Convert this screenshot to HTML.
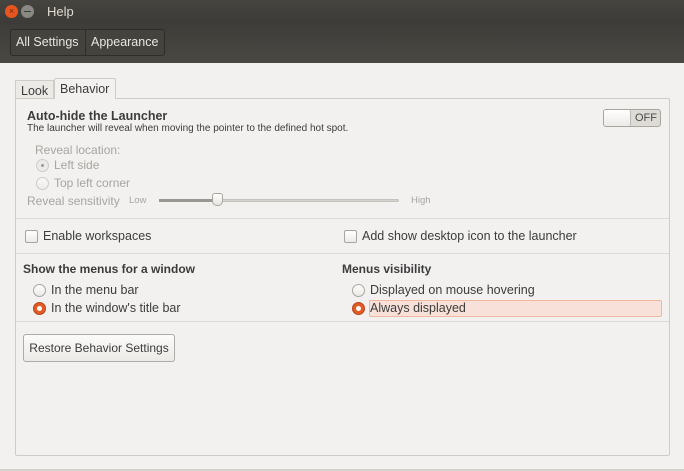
<!DOCTYPE html>
<html><head><meta charset="utf-8"><style>
*{margin:0;padding:0;box-sizing:border-box}
body{width:684px;height:471px;overflow:hidden;background:#f2f1f0;font-family:"Liberation Sans",sans-serif;font-size:12px;color:#3c3c3c;position:relative}
.a{position:absolute;white-space:nowrap}
.title{left:0;top:0;width:684px;height:24px;background:linear-gradient(#46443f,#3c3b37)}
.tool{left:0;top:24px;width:684px;height:39px;background:linear-gradient(#3e3d39,#4a4843)}
.tb{top:29px;height:27px;border:1px solid #2e2d2a;border-radius:3px;background:#45433e;color:#e8e6e2;font-size:12.5px;line-height:25px;padding:0 5px}
.panel{left:15px;top:98px;width:655px;height:358px;border:1px solid #cfccc8;border-radius:2px}
.sep{left:16px;width:653px;height:1px;background:#dcdad6}
.radio{width:13px;height:13px;border-radius:50%;border:1px solid #a9a59f;background:linear-gradient(#fff,#eae8e5)}
.on{background:#e25a24;border-color:#b94418}
.on::after{content:"";position:absolute;left:3px;top:3px;width:5px;height:5px;border-radius:50%;background:#fff}
.cb{width:13px;height:13px;border:1px solid #a9a59f;border-radius:2px;background:linear-gradient(#fff,#eceae7)}
.dis{color:#a8a5a0}
b{font-weight:bold}
</style></head><body>
<div class="a title"></div>
<div class="a" style="left:5px;top:5px;width:13px;height:13px;border-radius:50%;background:#e9551f;color:#6a2a10;font-size:9px;line-height:13px;text-align:center">×</div>
<div class="a" style="left:21px;top:5px;width:13px;height:13px;border-radius:50%;background:#8a8882"></div>
<div class="a" style="left:24px;top:11px;width:7px;height:1px;background:#3c3b37"></div>
<div class="a" style="left:47px;top:4px;color:#dfdbd2;font-size:13px">Help</div>
<div class="a tool"></div>
<div class="a tb" style="left:10px;width:76px;border-radius:3px 0 0 3px">All Settings</div>
<div class="a tb" style="left:85px;width:80px;border-radius:0 3px 3px 0">Appearance</div>
<div class="a" style="left:15px;top:80px;width:39px;height:19px;border:1px solid #cfccc8;border-bottom:none;background:#eceae7;font-size:12.5px;padding:3px 0 0 5px">Look</div>
<div class="a" style="left:54px;top:78px;width:62px;height:21px;border:1px solid #cfccc8;border-bottom:none;border-radius:2px 2px 0 0;background:#f2f1f0;font-size:12.5px;padding:3px 0 0 5px;z-index:2">Behavior</div>
<div class="a panel"></div>
<div class="a" style="left:27px;top:109px;font-size:12.5px"><b>Auto-hide the Launcher</b></div>
<div class="a" style="left:27px;top:123px;font-size:10px">The launcher will reveal when moving the pointer to the defined hot spot.</div>
<div class="a" style="left:603px;top:109px;width:58px;height:18px;border:1px solid #a9a59f;border-radius:3px;background:#dedbd7;font-size:11px;line-height:16px;padding-left:31px;color:#4a4a4a">OFF</div>
<div class="a" style="left:604px;top:110px;width:27px;height:16px;border-radius:2px;background:linear-gradient(#fff,#eceae7);border-right:1px solid #bbb"></div>
<div class="a dis" style="left:35px;top:143px;font-size:12px">Reveal location:</div>
<div class="a radio" style="left:36px;top:159px;opacity:.5;background:#e6e4e1"></div>
<div class="a" style="left:41px;top:164px;width:3px;height:3px;border-radius:50%;background:#999"></div>
<div class="a dis" style="left:54px;top:158px">Left side</div>
<div class="a radio" style="left:36px;top:177px;opacity:.5"></div>
<div class="a dis" style="left:54px;top:176px">Top left corner</div>
<div class="a dis" style="left:27px;top:194px">Reveal sensitivity</div>
<div class="a dis" style="left:129px;top:195px;font-size:9.5px">Low</div>
<div class="a" style="left:159px;top:199px;width:240px;height:3px;border-radius:2px;background:#d7d4d0;border:1px solid #c5c2bd"></div>
<div class="a" style="left:159px;top:199px;width:58px;height:3px;background:#9a9691"></div>
<div class="a" style="left:212px;top:193px;width:11px;height:13px;border:1px solid #a9a59f;border-radius:3px 3px 5px 5px;background:linear-gradient(#fff,#e6e4e1)"></div>
<div class="a dis" style="left:411px;top:195px;font-size:9.5px">High</div>
<div class="a sep" style="top:218px"></div>
<div class="a cb" style="left:25px;top:230px"></div>
<div class="a" style="left:43px;top:229px;font-size:12.5px">Enable workspaces</div>
<div class="a cb" style="left:344px;top:230px"></div>
<div class="a" style="left:362px;top:229px;font-size:12.5px">Add show desktop icon to the launcher</div>
<div class="a sep" style="top:253px"></div>
<div class="a" style="left:23px;top:262px;font-size:12px"><b>Show the menus for a window</b></div>
<div class="a" style="left:342px;top:262px;font-size:12px"><b>Menus visibility</b></div>
<div class="a radio" style="left:33px;top:284px"></div>
<div class="a" style="left:51px;top:283px;font-size:12.5px">In the menu bar</div>
<div class="a radio on" style="left:33px;top:302px"></div>
<div class="a" style="left:51px;top:301px;font-size:12.5px">In the window's title bar</div>
<div class="a radio" style="left:352px;top:284px"></div>
<div class="a" style="left:370px;top:283px;font-size:12.5px">Displayed on mouse hovering</div>
<div class="a" style="left:369px;top:300px;width:293px;height:17px;border:1px solid #f0b8a0;border-radius:2px;background:#f7e1d8"></div>
<div class="a radio on" style="left:352px;top:302px"></div>
<div class="a" style="left:370px;top:301px;font-size:12.5px">Always displayed</div>
<div class="a sep" style="top:321px"></div>
<div class="a" style="left:23px;top:334px;width:152px;height:28px;border:1px solid #aeaaa5;border-radius:3px;background:linear-gradient(#fbfbfa,#eceae7);font-size:12px;line-height:26px;text-align:center">Restore Behavior Settings</div>
<div class="a" style="left:0;top:469px;width:684px;height:2px;background:#d5d2ce"></div>
</body></html>
